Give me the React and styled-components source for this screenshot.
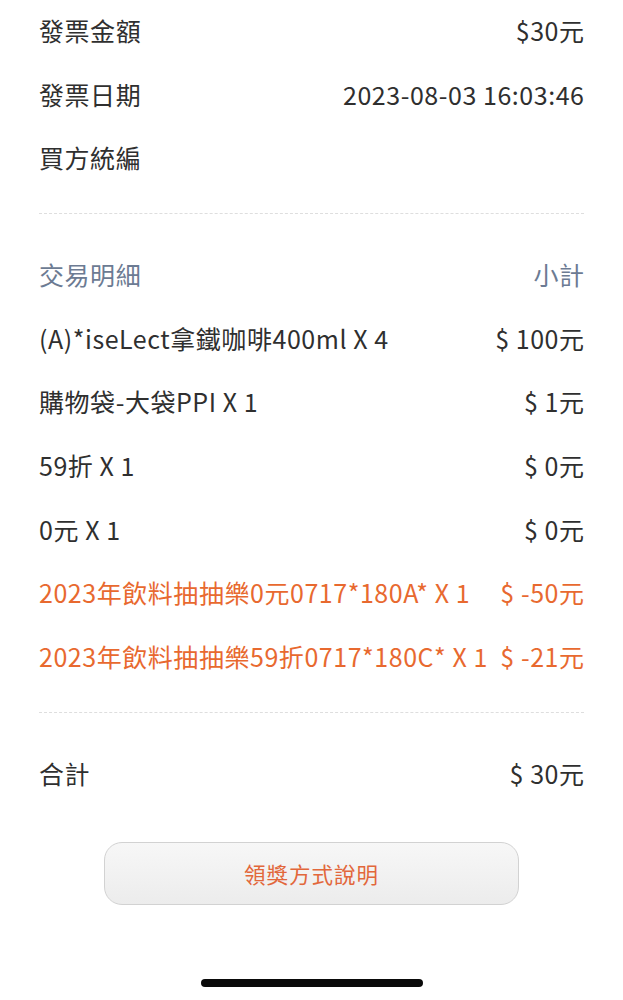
import React from "react";
import styled, { createGlobalStyle } from "styled-components";

const GlobalStyle = createGlobalStyle`
  body {
    margin: 0;
    background: #ffffff;
    font-family: "Noto Sans CJK TC", "Noto Sans", sans-serif;
  }
`;

const invoice = [
  { label: "發票金額", value: "$30元" },
  { label: "發票日期", value: "2023-08-03 16:03:46" },
  { label: "買方統編", value: "" },
];

const items = [
  { name: "(A)*iseLect拿鐵咖啡400ml X 4", amount: "$ 100元" },
  { name: "購物袋-大袋PPI X 1", amount: "$ 1元" },
  { name: "59折 X 1", amount: "$ 0元" },
  { name: "0元 X 1", amount: "$ 0元" },
  { name: "2023年飲料抽抽樂0元0717*180A* X 1", amount: "$ -50元", promo: true },
  { name: "2023年飲料抽抽樂59折0717*180C* X 1", amount: "$ -21元", promo: true },
];

function App() {
  return (
    <Page>
      <GlobalStyle />
      <Section>
        {invoice.map((row) => (
          <Row key={row.label}>
            <span>{row.label}</span>
            <span>{row.value}</span>
          </Row>
        ))}
      </Section>

      <Divider />

      <Section>
        <Row $tone="muted">
          <span>交易明細</span>
          <span>小計</span>
        </Row>
        {items.map((item) => (
          <Row key={item.name} $tone={item.promo ? "promo" : undefined}>
            <span>{item.name}</span>
            <span>{item.amount}</span>
          </Row>
        ))}
      </Section>

      <Divider />

      <Section>
        <Row>
          <span>合計</span>
          <span>$ 30元</span>
        </Row>
      </Section>

      <ButtonWrap>
        <PrizeButton type="button">領獎方式說明</PrizeButton>
      </ButtonWrap>

      <HomeBar />
    </Page>
  );
}

const Page = styled.div`
  width: 623px;
  height: 1000px;
  box-sizing: border-box;
  padding: 0 39px;
  display: flex;
  flex-direction: column;
  overflow: hidden;
  margin-top: -2px;
`;

const Section = styled.div`
  display: flex;
  flex-direction: column;
`;

const Row = styled.div`
  height: 63.7px;
  display: flex;
  align-items: center;
  justify-content: space-between;
  gap: 10px;
  font-size: 25px;
  letter-spacing: 0.55px;
  white-space: nowrap;
  color: ${({ $tone }) =>
    $tone === "muted" ? "#6c7b93" : $tone === "promo" ? "#e8692f" : "#2f2f2f"};

  span:last-child {
    margin-right: -0.55px;
  }
`;

const Divider = styled.div`
  margin: 24px 0 28px;
  height: 0;
  border-top: 1.5px dashed #dedede;
`;

const ButtonWrap = styled.div`
  display: flex;
  justify-content: center;
  margin-top: 37px;
`;

const PrizeButton = styled.button`
  width: 415px;
  height: 63px;
  border: 1.5px solid #d2d2d2;
  border-radius: 18px;
  background: linear-gradient(#f7f7f7, #ececec);
  color: #e2673b;
  font-family: "Noto Sans CJK TC", "Noto Sans", sans-serif;
  font-size: 21.5px;
  letter-spacing: 1px;
`;

const HomeBar = styled.div`
  align-self: center;
  width: 222px;
  height: 8px;
  border-radius: 4px;
  background: #0a0a0a;
  margin-top: 74px;
`;

export default App;
